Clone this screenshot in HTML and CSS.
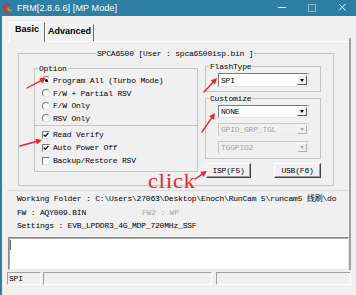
FILE: index.html
```html
<!DOCTYPE html>
<html>
<head>
<meta charset="utf-8">
<link rel="stylesheet" href="styles.css">
</head>
<body>
<div class="titlebar">
  <svg class="app-icon" viewBox="0 0 12 12">
    <path d="M6 0.8 C2.2 0.8 0 3.8 0.9 7 C1.9 10.2 5 12 8.2 11 C5.2 10.2 3.2 8 4 5.2 C4.8 3 7 2.2 9.2 3 C8.4 1.6 7.3 0.8 6 0.8Z" fill="#e2302a"/>
    <path d="M7.2 4 C5.4 5 5.4 8 8 8.8 C10 9.4 11.6 8 11.2 5.8 C10.6 7.4 9.2 7.9 8.2 7.2 C7.2 6.5 7 5.2 7.2 4Z" fill="#f08a2c"/>
  </svg>
  <span class="title">FRM[2.8.6.6] [MP Mode]</span>
  <svg class="controls" viewBox="0 0 80 16">
    <line x1="2" y1="7.5" x2="10" y2="7.5" stroke="#fff" stroke-width="1"/>
    <rect x="32.5" y="4.5" width="7" height="7" fill="none" stroke="#8fb9cc" stroke-width="1"/>
    <line x1="63" y1="4" x2="69.5" y2="10.5" stroke="#fff" stroke-width="1"/>
    <line x1="69.5" y1="4" x2="63" y2="10.5" stroke="#fff" stroke-width="1"/>
  </svg>
</div>

<div class="frame">
  <div class="main">
    <div class="tabs">
      <div class="tab active">Basic</div>
      <div class="tab">Advanced</div>
    </div>
    <div class="panel">
      <div class="group spca">
        <span class="legend spca-legend">SPCA6500 [User : spca6500isp.bin ]</span>
        <div class="spca-row">
          <div class="group option">
            <span class="legend small-legend">Option</span>
            <div class="row radio-row"><span class="radio on"></span>Program All (Turbo Mode)</div>
            <div class="row radio-row"><span class="radio"></span>F/W + Partial RSV</div>
            <div class="row radio-row"><span class="radio"></span>F/W Only</div>
            <div class="row radio-row"><span class="radio"></span>RSV Only</div>
            <div class="sep"></div>
            <div class="row check-row"><span class="check"><svg viewBox="0 0 6 6"><path d="M0.6 2.6 L2.4 4.4 L5.4 0.8" fill="none" stroke="#000" stroke-width="1.3"/></svg></span>Read Verify</div>
            <div class="row check-row"><span class="check"><svg viewBox="0 0 6 6"><path d="M0.6 2.6 L2.4 4.4 L5.4 0.8" fill="none" stroke="#000" stroke-width="1.3"/></svg></span>Auto Power Off</div>
            <div class="row check-row"><span class="check"></span>Backup/Restore RSV</div>
          </div>
          <div class="rightcol">
            <div class="group flashtype">
              <span class="legend small-legend">FlashType</span>
              <div class="select">SPI<span class="drop"><span class="tri"></span></span></div>
            </div>
            <div class="group customize">
              <span class="legend small-legend">Customize</span>
              <div class="select sm">NONE<span class="drop"><span class="tri"></span></span></div>
              <div class="select sm disabled">GPIO_GRP_TGL<span class="drop"><span class="tri"></span></span></div>
              <div class="select sm disabled">TGGPIO2<span class="drop"><span class="tri"></span></span></div>
            </div>
            <div class="buttons">
              <div class="btn isp">ISP(F5)</div>
              <div class="btn usb">USB(F6)</div>
            </div>
          </div>
        </div>
      </div>
    </div>
    <div class="info">
      <div class="line">Working Folder : C:\Users\27063\Desktop\Enoch\RunCam 5\runcam5 线刷\do</div>
      <div class="line fw-row"><span class="fw1">FW : AQY009.BIN</span><span class="fw2">FW2 : WP</span></div>
      <div class="line">Settings : EVB_LPDDR3_4G_MDP_720MHz_SSF</div>
    </div>
    <div class="log"><span class="caret"></span></div>
  </div>
  <div class="statusbar">
    <div class="sp sp1">SPI</div>
    <div class="sp sp2"></div>
    <div class="sp sp3"></div>
  </div>
</div>

<div class="click">click</div>
<svg class="annot" viewBox="0 0 356 295">
  <g stroke="#e52626" stroke-width="1.4" fill="none" stroke-linecap="round">
    <line x1="27" y1="88" x2="41.6" y2="80.3"/>
    <line x1="20" y1="146" x2="37.2" y2="141.3"/>
    <line x1="204" y1="92" x2="213.6" y2="81.7"/>
    <line x1="202" y1="132" x2="212.2" y2="117.1"/>
    <line x1="195" y1="179" x2="202.8" y2="173.8"/>
  </g>
  <g fill="#e52626">
    <polygon points="46,78 42.09,83.46 39.29,78.14"/>
    <polygon points="42,140 37,144.47 35.42,138.69"/>
    <polygon points="217,78 215.12,84.44 210.72,80.36"/>
    <polygon points="215,113 214.09,119.65 209.13,116.25"/>
    <polygon points="207,171 203.67,176.83 200.33,171.83"/>
  </g>
</svg>
</body>
</html>
```

FILE: styles.css
```css
* { box-sizing: border-box; }
html, body { margin: 0; padding: 0; }
body {
  width: 356px;
  height: 295px;
  overflow: hidden;
  position: relative;
  background: #f0f0f0;
  font-family: "Liberation Mono", "Noto Sans CJK SC", monospace;
  font-size: 8px;
  letter-spacing: -0.2px;
  color: #000;
}

/* title bar */
.titlebar {
  height: 16px;
  background: #2d7fa4;
  display: flex;
  align-items: center;
  color: #fff;
}
.app-icon { width: 11px; height: 11px; margin-left: 2px; }
.title {
  font-family: "Liberation Sans", Arial, sans-serif;
  font-size: 9px;
  letter-spacing: 0.1px;
  margin-left: 4px;
}
.controls { margin-left: auto; width: 80px; height: 16px; }

/* frame */
.frame {
  border-left: 2px solid #2d7fa4;
  height: 279px;
}
.main {
  position: relative;
  width: 349px;
  padding: 6px 0 0 4px;
}
.main::after {
  content: "";
  position: absolute;
  right: 0;
  top: 22px;
  bottom: 0;
  width: 2px;
  background: #a0a0a0;
}

/* tabs */
.tabs {
  display: flex;
  align-items: flex-end;
  height: 19px;
  padding-left: 3px;
  font-family: "Liberation Sans", Arial, sans-serif;
  font-weight: bold;
  font-size: 9px;
  letter-spacing: 0;
}
.tab {
  height: 17px;
  width: 49px;
  line-height: 12px;
  text-align: center;
  background: #f0f0f0;
  border: 1px solid;
  border-color: #ffffff #696969 transparent #ffffff;
  border-bottom: none;
}
.tab.active {
  width: 36px;
  height: 20px;
  margin-bottom: -1px;
  position: relative;
  z-index: 1;
}

/* panel */
.panel {
  position: relative;
  width: 345px;
  height: 150px;
  border: 1px solid;
  border-color: #ffffff #f0f0f0 #dadada #ffffff;
  padding: 11px 0 0 11px;
}

.group {
  position: relative;
  border: 1px solid #c3c3c3;
}
.legend {
  position: absolute;
  top: -6px;
  line-height: 11px;
  padding: 0 1px;
  background: #f0f0f0;
  white-space: nowrap;
}
.spca-legend { left: 77px; }
.small-legend { left: 3px; }

.spca {
  width: 316px;
  height: 133px;
  padding: 14px 0 0 15px;
}
.spca-row {
  display: flex;
  align-items: flex-start;
  gap: 7px;
}

/* option group */
.option {
  width: 164px;
  height: 104px;
  padding-top: 5px;
}
.row {
  display: flex;
  align-items: center;
  padding-left: 7px;
  white-space: nowrap;
}
.radio-row { height: 12.7px; }
.check-row { height: 13px; }
.sep {
  border-top: 1px solid #c3c3c3;
  margin-bottom: 2.5px;
}
.radio {
  position: relative;
  width: 8px;
  height: 8px;
  border-radius: 50%;
  border: 1px solid;
  border-color: #7a7a7a #e3e3e3 #e3e3e3 #7a7a7a;
  background: #fff;
  margin-right: 3px;
  flex: none;
}
.radio.on::after {
  content: "";
  position: absolute;
  left: 1.5px;
  top: 1.5px;
  width: 3px;
  height: 3px;
  border-radius: 50%;
  background: #000;
}
.check {
  width: 8px;
  height: 8px;
  border: 1px solid;
  border-color: #7a7a7a #e3e3e3 #e3e3e3 #7a7a7a;
  background: #fff;
  margin-right: 3px;
  flex: none;
  display: flex;
}
.check svg { width: 6px; height: 6px; }

/* right column */
.rightcol {
  width: 116px;
  margin-top: -2px;
}
.flashtype {
  height: 26px;
  padding: 6px 0 0 12px;
}
.customize {
  height: 61px;
  margin-top: 6px;
  padding: 6px 0 0 12px;
  display: flex;
  flex-direction: column;
  gap: 5px;
}
.select {
  width: 91px;
  height: 14px;
  display: flex;
  align-items: center;
  padding-left: 2px;
  background: #fff;
  border: 1px solid;
  border-color: #7a7a7a #e3e3e3 #e3e3e3 #7a7a7a;
  white-space: nowrap;
}
.select.sm { height: 13px; }
.select.disabled {
  background: #f0f0f0;
  color: #a3a3a3;
  border-color: #c8c8c8 #ececec #ececec #c8c8c8;
}
.drop {
  margin-left: auto;
  margin-right: 1px;
  width: 10px;
  height: 10px;
  background: #f0f0f0;
  border: 1px solid;
  border-color: #f8f8f8 #555 #555 #f8f8f8;
  display: flex;
  align-items: center;
  justify-content: center;
}
.select.sm .drop { height: 9px; }
.tri {
  width: 0;
  height: 0;
  border-left: 2.5px solid transparent;
  border-right: 2.5px solid transparent;
  border-top: 3px solid #000;
}
.disabled .drop { border-color: #fafafa #b0b0b0 #b0b0b0 #fafafa; }
.disabled .tri { border-top-color: #a8a8a8; }

.buttons {
  display: flex;
  justify-content: space-between;
  margin-top: 4px;
  padding-left: 1px;
}
.btn {
  height: 15px;
  display: flex;
  align-items: center;
  justify-content: center;
  background: #f0f0f0;
  border: 1px solid;
  border-color: #ffffff #404040 #404040 #ffffff;
  box-shadow: inset -1px -1px 0 #a0a0a0;
  white-space: nowrap;
}
.isp { width: 45px; }
.usb { width: 47px; }

/* info */
.info {
  width: 345px;
  padding: 1px 0 0 11px;
  line-height: 13.5px;
  white-space: nowrap;
}
.fw-row { display: flex; }
.fw1 { width: 125px; }
.fw2 { color: #a6a6a6; }

/* log */
.log {
  position: relative;
  width: 341px;
  height: 33px;
  margin: 4.5px 0 0 2px;
  background: #fff;
  border: 1px solid;
  border-color: #8a8a8a #e8e8e8 #e8e8e8 #8a8a8a;
  box-shadow: inset 1px 1px 0 #a8a8a8;
}
.caret {
  position: absolute;
  left: 1px;
  top: 2px;
  width: 1px;
  height: 10px;
  background: #666;
}

/* status bar */
.statusbar {
  display: flex;
  margin-top: 2px;
  padding-left: 5px;
}
.sp {
  height: 13px;
  line-height: 11px;
  padding-left: 1px;
  border: 1px solid;
  border-color: #a0a0a0 #ffffff #ffffff #a0a0a0;
}
.sp1 { width: 34px; }
.sp2 { width: 169px; margin-left: 2px; }
.sp3 { width: 135px; margin-left: 4px; }

/* annotations */
.click {
  position: absolute;
  left: 148px;
  top: 170px;
  font-family: "Liberation Serif", "Times New Roman", serif;
  font-size: 22px;
  line-height: 22px;
  letter-spacing: 1px;
  color: #e52626;
}
.annot {
  position: absolute;
  left: 0;
  top: 0;
  width: 356px;
  height: 295px;
  pointer-events: none;
}
```
